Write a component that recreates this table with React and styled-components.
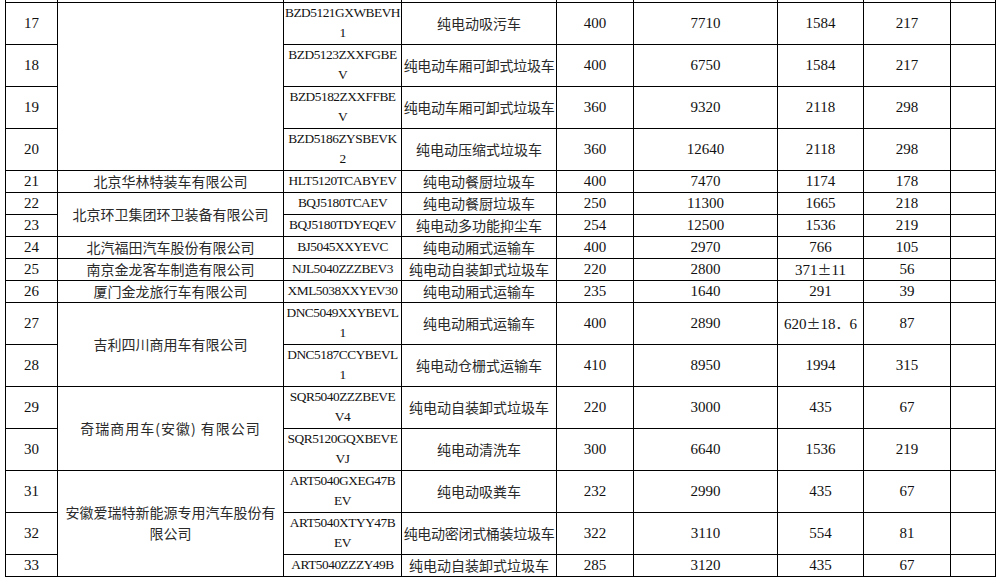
import React from "react"
import styled, { createGlobalStyle } from "styled-components"

const GlobalStyle = createGlobalStyle`
    html, body {
        margin: 0;
        padding: 0;
        background: #fff;
    }
`

const Page = styled.div`
    width: 999px;
    height: 578px;
    overflow: hidden;
    padding: 0 0 0 5px;
    box-sizing: border-box;
    background: #fff;
`

const Table = styled.table`
    border-collapse: collapse;
    table-layout: fixed;
    width: 991px;
    color: #111;
    font-family: "Liberation Serif", "Noto Sans CJK SC", serif;
`

const Row = styled.tr`
    height: ${(p) => p.$h}px;
`

const Cell = styled.td`
    border: 1px solid #000;
    border-top: ${(p) => (p.$cut ? "none" : "1px solid #000")};
    padding: 0;
    text-align: center;
    vertical-align: middle;
    white-space: nowrap;
    overflow: visible;
    line-height: 20px;
    font-size: 15px;
`

const Cjk = styled.span`
    font-family: "Noto Sans CJK SC", sans-serif;
    font-size: 14px;
    color: #2a2a2a;
    letter-spacing: ${(p) => p.$spacing || 0}px;
`

const Code = styled.span`
    display: block;
    font-size: 13.4px;
    letter-spacing: -0.5px;
    line-height: 20px;
`

const widths = [52, 226, 118, 155, 77, 144, 86, 87, 45]

const rows = [
    { no: 17, co: { text: [], span: 4 }, model: ["BZD5121GXWBEVH", "1"], name: "纯电动吸污车", v: ["400", "7710", "1584", "217"] },
    { no: 18, model: ["BZD5123ZXXFGBE", "V"], name: "纯电动车厢可卸式垃圾车", v: ["400", "6750", "1584", "217"] },
    { no: 19, model: ["BZD5182ZXXFFBE", "V"], name: "纯电动车厢可卸式垃圾车", v: ["360", "9320", "2118", "298"] },
    { no: 20, model: ["BZD5186ZYSBEVK", "2"], name: "纯电动压缩式垃圾车", v: ["360", "12640", "2118", "298"] },
    { no: 21, h: 22, co: { text: ["北京华林特装车有限公司"], span: 1 }, model: ["HLT5120TCABYEV"], name: "纯电动餐厨垃圾车", v: ["400", "7470", "1174", "178"] },
    { no: 22, h: 21, co: { text: ["北京环卫集团环卫装备有限公司"], span: 2 }, model: ["BQJ5180TCAEV"], name: "纯电动餐厨垃圾车", v: ["250", "11300", "1665", "218"] },
    { no: 23, h: 22, model: ["BQJ5180TDYEQEV"], name: "纯电动多功能抑尘车", v: ["254", "12500", "1536", "219"] },
    { no: 24, h: 22, co: { text: ["北汽福田汽车股份有限公司"], span: 1 }, model: ["BJ5045XXYEVC"], name: "纯电动厢式运输车", v: ["400", "2970", "766", "105"] },
    { no: 25, h: 22, co: { text: ["南京金龙客车制造有限公司"], span: 1 }, model: ["NJL5040ZZZBEV3"], name: "纯电动自装卸式垃圾车", v: ["220", "2800", "371±11", "56"] },
    { no: 26, h: 22, co: { text: ["厦门金龙旅行车有限公司"], span: 1 }, model: ["XML5038XXYEV30"], name: "纯电动厢式运输车", v: ["235", "1640", "291", "39"] },
    { no: 27, co: { text: ["吉利四川商用车有限公司"], span: 2 }, model: ["DNC5049XXYBEVL", "1"], name: "纯电动厢式运输车", v: ["400", "2890", "620±18．6", "87"] },
    { no: 28, model: ["DNC5187CCYBEVL", "1"], name: "纯电动仓栅式运输车", v: ["410", "8950", "1994", "315"] },
    { no: 29, co: { text: ["奇瑞商用车(安徽) 有限公司"], span: 2, spacing: 1 }, model: ["SQR5040ZZZBEVE", "V4"], name: "纯电动自装卸式垃圾车", v: ["220", "3000", "435", "67"] },
    { no: 30, model: ["SQR5120GQXBEVE", "VJ"], name: "纯电动清洗车", v: ["300", "6640", "1536", "219"] },
    { no: 31, co: { text: ["安徽爱瑞特新能源专用汽车股份有", "限公司"], span: 3 }, model: ["ART5040GXEG47B", "EV"], name: "纯电动吸粪车", v: ["232", "2990", "435", "67"] },
    { no: 32, model: ["ART5040XTYY47B", "EV"], name: "纯电动密闭式桶装垃圾车", v: ["322", "3110", "554", "81"] },
    { no: 33, h: 21, model: ["ART5040ZZZY49B"], name: "纯电动自装卸式垃圾车", v: ["285", "3120", "435", "67"] },
]

function Value({ text }) {
    // the ± and full-width dot come from the CJK font
    const parts = text.split(/([±．])/)
    return parts.map((p, i) =>
        p === "±" || p === "．" ? <Cjk key={i}>{p}</Cjk> : <React.Fragment key={i}>{p}</React.Fragment>
    )
}

export default function App() {
    return (
        <Page>
            <GlobalStyle />
            <Table>
                <colgroup>
                    {widths.map((w, i) => (
                        <col key={i} style={{ width: w }} />
                    ))}
                </colgroup>
                <tbody>
                    <Row $h={2}>
                        {widths.map((w, i) => (
                            <Cell key={i} $cut />
                        ))}
                    </Row>
                    {rows.map((r) => (
                        <Row key={r.no} $h={r.h || 42}>
                            <Cell>{r.no}</Cell>
                            {r.co && (
                                <Cell rowSpan={r.co.span}>
                                    {r.co.text.map((t, i) => (
                                        <div key={i}>
                                            <Cjk $spacing={r.co.spacing}>{t}</Cjk>
                                        </div>
                                    ))}
                                </Cell>
                            )}
                            <Cell>
                                {r.model.map((m, i) => (
                                    <Code key={i}>{m}</Code>
                                ))}
                            </Cell>
                            <Cell>
                                <Cjk $spacing={r.name.length > 10 ? -0.3 : 0}>{r.name}</Cjk>
                            </Cell>
                            {r.v.map((x, i) => (
                                <Cell key={i}>
                                    <Value text={x} />
                                </Cell>
                            ))}
                            <Cell />
                        </Row>
                    ))}
                </tbody>
            </Table>
        </Page>
    )
}
